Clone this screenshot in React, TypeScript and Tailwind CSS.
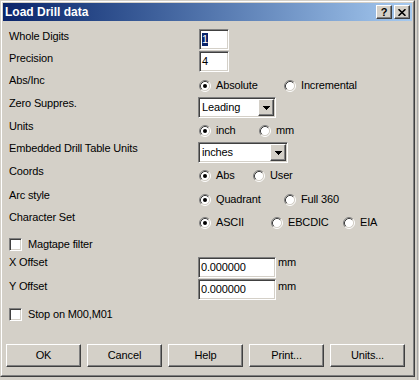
import React from "react";

const sunken =
  "border border-t-[#808080] border-l-[#808080] border-r-white border-b-white shadow-[inset_1px_1px_0_#404040,inset_-1px_-1px_0_#d4d0c8]";
const raised =
  "border border-t-white border-l-white border-r-[#404040] border-b-[#404040] shadow-[inset_-1px_-1px_0_#808080]";

function Radio({ checked }: { checked?: boolean }) {
  return (
    <svg width="12" height="12" viewBox="0 0 12 12" className="shrink-0 block">
      <circle cx="6" cy="6" r="4.5" fill="#ffffff" />
      <path d="M 2.11 9.89 A 5.5 5.5 0 0 1 9.89 2.11" stroke="#808080" strokeWidth="1" fill="none" />
      <path d="M 9.89 2.11 A 5.5 5.5 0 0 1 2.11 9.89" stroke="#ffffff" strokeWidth="1" fill="none" />
      <path d="M 2.82 9.18 A 4.5 4.5 0 0 1 9.18 2.82" stroke="#404040" strokeWidth="1" fill="none" />
      <path d="M 9.18 2.82 A 4.5 4.5 0 0 1 2.82 9.18" stroke="#d4d0c8" strokeWidth="1" fill="none" />
      {checked && <circle cx="6" cy="6" r="2" fill="#000000" />}
    </svg>
  );
}

function RadioItem({ label, checked, className }: { label: string; checked?: boolean; className?: string }) {
  return (
    <div className={`flex items-center h-[13px] ${className ?? ""}`}>
      <Radio checked={checked} />
      <span className="ml-[5px] whitespace-nowrap">{label}</span>
    </div>
  );
}

function Check({ label }: { label: string }) {
  return (
    <div className="flex items-start">
      <div className={`w-[13px] h-[13px] bg-white shrink-0 ${sunken}`} />
      <span className="ml-[6px] whitespace-nowrap">{label}</span>
    </div>
  );
}

function Arrow() {
  return (
    <svg width="7" height="4" viewBox="0 0 7 4" className="block" shapeRendering="crispEdges">
      <rect x="0" y="0" width="7" height="1" fill="#000" />
      <rect x="1" y="1" width="5" height="1" fill="#000" />
      <rect x="2" y="2" width="3" height="1" fill="#000" />
      <rect x="3" y="3" width="1" height="1" fill="#000" />
    </svg>
  );
}

function Combo({ text, className }: { text: string; className: string }) {
  return (
    <div className={`h-[21px] bg-white p-px flex items-stretch ${sunken} ${className}`}>
      <div className="flex-1 flex items-center pl-[2px] whitespace-nowrap">{text}</div>
      <div className={`w-[16px] bg-[#d4d0c8] flex items-center justify-center ${raised}`}>
        <Arrow />
      </div>
    </div>
  );
}

function Field({ children, className }: { children: React.ReactNode; className: string }) {
  return (
    <div className={`h-[21px] bg-white flex items-center pl-[2px] whitespace-nowrap ${sunken} ${className}`}>
      {children}
    </div>
  );
}

function Button({ label }: { label: string }) {
  return (
    <div className={`w-[75px] h-[23px] bg-[#d4d0c8] flex items-center justify-center ${raised}`}>
      {label}
    </div>
  );
}

export default function App() {
  return (
    <div className="w-[419px] h-[380px] bg-[#d4d0c8] overflow-hidden flex font-['Liberation_Sans',Arial,sans-serif] text-[11px] leading-[13px] tracking-[-0.15px] text-black">
      <div className="w-[415px] h-[377px] shrink-0 border border-t-[#d4d0c8] border-l-[#d4d0c8] border-r-[#404040] border-b-[#404040]">
        <div className="h-full border border-t-white border-l-white border-r-[#808080] border-b-[#808080] p-px flex flex-col">
          {/* Title bar */}
          <div className="h-[18px] shrink-0 bg-linear-to-r from-[#0a246a] to-[#a6caf0] flex items-center justify-between pl-[2px] pr-[2px]">
            <span className="text-white font-bold text-[12px] leading-[14px] tracking-normal whitespace-nowrap">Load Drill data</span>
            <div className="flex gap-[2px]">
              <div className={`w-[16px] h-[14px] bg-[#d4d0c8] flex items-center justify-center font-bold text-[11px] leading-[11px] ${raised}`}>
                ?
              </div>
              <div className={`w-[16px] h-[14px] bg-[#d4d0c8] flex items-center justify-center ${raised}`}>
                <svg width="8" height="7" viewBox="0 0 8 7" className="block">
                  <path d="M0.5 0.2 L7.5 6.8 M7.5 0.2 L0.5 6.8" stroke="#000" strokeWidth="1.6" fill="none" />
                </svg>
              </div>
            </div>
          </div>

          {/* Content */}
          <div className="pl-[6px] pt-[8px] flex flex-col">
            {/* Whole Digits */}
            <div className="flex h-[22px]">
              <div className="w-[189px] pt-px">Whole Digits</div>
              <Field className="w-[30px] ml-px">
                <span className="bg-[#0a246a] text-white">1</span>
              </Field>
            </div>
            {/* Precision */}
            <div className="flex h-[22px]">
              <div className="w-[189px] pt-px">Precision</div>
              <Field className="w-[30px] ml-px">4</Field>
            </div>
            {/* Abs/Inc */}
            <div className="flex h-[24px]">
              <div className="w-[189px] pt-px">Abs/Inc</div>
              <div className="flex pt-[6px] pl-px">
                <RadioItem label="Absolute" checked className="w-[85px]" />
                <RadioItem label="Incremental" />
              </div>
            </div>
            {/* Zero Suppres. */}
            <div className="flex h-[22px]">
              <div className="w-[189px]">Zero Suppres.</div>
              <Combo text="Leading" className="w-[78px]" />
            </div>
            {/* Units */}
            <div className="flex h-[22px]">
              <div className="w-[189px] pt-px">Units</div>
              <div className="flex pt-[5px] pl-px">
                <RadioItem label="inch" checked className="w-[60px]" />
                <RadioItem label="mm" />
              </div>
            </div>
            {/* Embedded Drill Table Units */}
            <div className="flex h-[23px]">
              <div className="w-[189px] pt-px">Embedded Drill Table Units</div>
              <div className="pt-px">
                <Combo text="inches" className="w-[90px]" />
              </div>
            </div>
            {/* Coords */}
            <div className="flex h-[23px]">
              <div className="w-[189px] pt-px">Coords</div>
              <div className="flex pt-[5px] pl-px">
                <RadioItem label="Abs" checked className="w-[54px]" />
                <RadioItem label="User" />
              </div>
            </div>
            {/* Arc style */}
            <div className="flex h-[23px]">
              <div className="w-[189px] pt-[2px]">Arc style</div>
              <div className="flex pt-[6px] pl-px">
                <RadioItem label="Quadrant" checked className="w-[85px]" />
                <RadioItem label="Full 360" />
              </div>
            </div>
            {/* Character Set */}
            <div className="flex h-[24px]">
              <div className="w-[189px] pt-px">Character Set</div>
              <div className="flex pt-[6px] pl-px">
                <RadioItem label="ASCII" checked className="w-[72px]" />
                <RadioItem label="EBCDIC" className="w-[72px]" />
                <RadioItem label="EIA" />
              </div>
            </div>
            {/* Magtape filter */}
            <div className="h-[22px] pt-[4px]">
              <Check label="Magtape filter" />
            </div>
            {/* X Offset */}
            <div className="flex h-[22px]">
              <div className="w-[189px]">X Offset</div>
              <div className="flex pt-px">
                <Field className="w-[78px]">0.000000</Field>
                <span className="ml-[2px] -mt-px">mm</span>
              </div>
            </div>
            {/* Y Offset */}
            <div className="flex h-[22px]">
              <div className="w-[189px] pt-[2px]">Y Offset</div>
              <div className="flex pt-px">
                <Field className="w-[78px]">0.000000</Field>
                <span className="ml-[2px] pt-px">mm</span>
              </div>
            </div>
            {/* Stop on M00,M01 */}
            <div className="h-[24px] pt-[8px]">
              <Check label="Stop on M00,M01" />
            </div>
          </div>

          {/* Buttons */}
          <div className="flex gap-[6px] pl-[3px] mt-[20px]">
            <Button label="OK" />
            <Button label="Cancel" />
            <Button label="Help" />
            <Button label="Print..." />
            <Button label="Units..." />
          </div>
        </div>
      </div>
      <div className="w-[2px] shrink-0" />
      <div className="w-px h-full bg-[#a8a8a8] shrink-0" />
    </div>
  );
}
